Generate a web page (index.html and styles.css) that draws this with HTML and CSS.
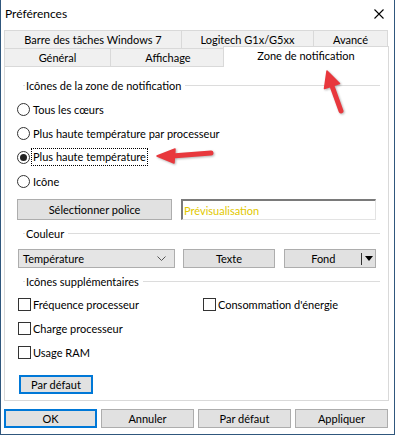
FILE: index.html
```html
<!DOCTYPE html>
<html lang="fr">
<head>
    <meta charset="UTF-8">
    <title>Préférences</title>
    <link rel="stylesheet" href="styles.css">
</head>
<body>
    <div class="window">
        <div class="titlebar">
            <span class="title">Préférences</span>
            <svg class="close" width="10" height="10" viewBox="0 0 10 10">
                <path d="M0.5 0.5 L9.5 9.5 M9.5 0.5 L0.5 9.5" stroke="#000" stroke-width="1.1" fill="none"/>
            </svg>
        </div>

        <div class="tabs">
            <div class="tab-row">
                <div class="tab t-barre">Barre des tâches Windows 7</div>
                <div class="tab t-logi">Logitech G1x/G5xx</div>
                <div class="tab t-avance last">Avancé</div>
            </div>
            <div class="tab-row">
                <div class="tab t-general">Général</div>
                <div class="tab t-affichage">Affichage</div>
                <div class="tab active t-zone">Zone de notification</div>
            </div>
        </div>

        <div class="panel">
            <div class="group-title"><span>Icônes de la zone de notification</span></div>
            <div class="radio-list">
                <div class="option"><span class="radio"></span><span class="label">Tous les cœurs</span></div>
                <div class="option"><span class="radio"></span><span class="label">Plus haute température par processeur</span></div>
                <div class="option"><span class="radio checked"></span><span class="label focus">Plus haute température</span></div>
                <div class="option"><span class="radio"></span><span class="label">Icône</span></div>
            </div>
            <div class="font-row">
                <button class="btn btn-font">Sélectionner police</button>
                <div class="preview">Prévisualisation</div>
            </div>

            <div class="group-title"><span>Couleur</span></div>
            <div class="color-row">
                <div class="combo">
                    <span>Température</span>
                    <svg width="9" height="6" viewBox="0 0 9 6"><polyline points="0.5,0.5 4.5,4.5 8.5,0.5" fill="none" stroke="#555" stroke-width="1"/></svg>
                </div>
                <button class="btn btn-texte">Texte</button>
                <div class="btn btn-fond">
                    <span class="fond-label">Fond</span>
                    <span class="split"></span>
                    <svg width="8" height="5" viewBox="0 0 8 5"><polygon points="0,0 8,0 4,5" fill="#000"/></svg>
                </div>
            </div>

            <div class="group-title"><span>Icônes supplémentaires</span></div>
            <div class="check-grid">
                <div class="option"><span class="check"></span><span class="label">Fréquence processeur</span></div>
                <div class="option"><span class="check"></span><span class="label">Consommation d'énergie</span></div>
                <div class="option"><span class="check"></span><span class="label">Charge processeur</span></div>
                <div></div>
                <div class="option"><span class="check"></span><span class="label">Usage RAM</span></div>
            </div>
            <button class="btn default btn-reset">Par défaut</button>
        </div>

        <div class="actions">
            <button class="btn default">OK</button>
            <button class="btn">Annuler</button>
            <button class="btn">Par défaut</button>
            <button class="btn">Appliquer</button>
        </div>

        <svg class="arrows" width="395" height="435" viewBox="0 0 395 435">
            <!-- fleche vers l'onglet -->
            <line x1="332" y1="86" x2="341" y2="111" stroke="#e8383d" stroke-width="5" stroke-linecap="round"/>
            <polygon points="327,71 339.5,83.5 324.5,88.5" fill="#e8383d" stroke="#e8383d" stroke-width="1.5" stroke-linejoin="round"/>
            <!-- fleche vers l'option -->
            <line x1="172" y1="156" x2="211" y2="153" stroke="#e8383d" stroke-width="5" stroke-linecap="round"/>
            <polygon points="157,156 175,149 174,163" fill="#e8383d" stroke="#e8383d" stroke-width="1.5" stroke-linejoin="round"/>
        </svg>
    </div>
</body>
</html>
```

FILE: styles.css
```css
body {
    margin: 0;
    padding: 0;
    background: #fff;
    font-family: Lato, "Noto Sans", sans-serif;
    font-size: 11px;
    color: #000;
}
.window {
    position: relative;
    width: 395px;
    height: 435px;
    box-sizing: border-box;
    border: 1px solid #30577d;
    border-top: none;
    background: #fff;
    overflow: hidden;
}
.titlebar {
    height: 30px;
    display: flex;
    align-items: center;
    justify-content: space-between;
    padding: 0 10px 0 4px;
    box-sizing: border-box;
}
.title {
    font-size: 12px;
    margin-top: -3px;
}
.close {
    margin-top: -3px;
}
.tabs {
    padding-left: 3px;
}
.tab-row {
    display: flex;
    height: 18px;
}
.tab {
    box-sizing: border-box;
    height: 18px;
    display: flex;
    align-items: center;
    justify-content: center;
    background: #f0f0f0;
    border-top: 1px solid #d9d9d9;
    border-left: 1px solid #d9d9d9;
}
.tab.last {
    border-right: 1px solid #d9d9d9;
}
.t-barre { width: 177px; }
.t-logi { width: 132px; }
.t-avance { width: 75px; }
.t-general { width: 106px; }
.t-affichage { width: 115px; }
.tab.active {
    position: relative;
    z-index: 2;
    width: 166px;
    height: 21px;
    margin: -2px 0 -1px -2px;
    background: #fff;
    border-right: 1px solid #d9d9d9;
    padding-bottom: 3px;
}
.panel {
    position: relative;
    z-index: 1;
    margin-left: 3px;
    width: 385px;
    height: 335px;
    box-sizing: border-box;
    border: 1px solid #d9d9d9;
    background: #fff;
    padding: 11px 12px 0 12px;
}
.group-title {
    display: flex;
    align-items: center;
    height: 14px;
    margin: 0 -4px 0 6px;
}
.group-title::before {
    content: "";
    width: 2px;
    border-top: 1px solid #dcdcdc;
}
.group-title::after {
    content: "";
    flex: 1;
    border-top: 1px solid #dcdcdc;
}
.group-title span {
    padding: 0 4px 0 1px;
}
.radio-list {
    margin-top: 5px;
}
.option {
    display: flex;
    align-items: center;
    height: 24px;
}
.radio {
    width: 13px;
    height: 13px;
    box-sizing: border-box;
    border: 1px solid #333;
    border-radius: 50%;
    margin-right: 3px;
    display: flex;
    align-items: center;
    justify-content: center;
}
.radio.checked::after {
    content: "";
    width: 7px;
    height: 7px;
    border-radius: 50%;
    background: #222;
}
.label.focus {
    outline: 1px dotted #000;
    outline-offset: 0;
    padding: 0 1px;
    margin-left: -1px;
    line-height: 16px;
}
.btn {
    font-family: inherit;
    font-size: inherit;
    color: #000;
    background: #e1e1e1;
    border: 1px solid #adadad;
    box-sizing: border-box;
    padding: 0;
    margin: 0;
    display: flex;
    align-items: center;
    justify-content: center;
}
.btn.default {
    border: 2px solid #0078d7;
}
.font-row {
    display: flex;
    margin-top: 6px;
}
.btn-font {
    width: 155px;
    height: 21px;
}
.preview {
    margin-left: 9px;
    width: 195px;
    height: 21px;
    box-sizing: border-box;
    border: 1px solid #e3e3e3;
    border-top: 2px solid #7a7a7a;
    border-left: 2px solid #7a7a7a;
    color: #e2c800;
    display: flex;
    align-items: center;
    padding-left: 1px;
}
.group-title + .color-row {
    margin-top: 9px;
}
.font-row + .group-title {
    margin-top: 6px;
}
.color-row {
    display: flex;
    height: 19px;
}
.combo {
    width: 157px;
    margin-left: 1px;
    box-sizing: border-box;
    background: #e5e5e5;
    border: 1px solid #adadad;
    display: flex;
    align-items: center;
    justify-content: space-between;
    padding: 0 8px 0 4px;
}
.btn-texte {
    width: 93px;
    margin-left: 8px;
}
.btn-fond {
    width: 92px;
    margin-left: 9px;
    justify-content: flex-start;
}
.fond-label {
    width: 76px;
    text-align: center;
}
.split {
    width: 1px;
    height: 12px;
    background: #333;
    margin-right: 3px;
}
.color-row + .group-title {
    margin-top: 6px;
}
.check-grid {
    display: grid;
    grid-template-columns: 185px auto;
    margin-top: 4px;
}
.check {
    width: 13px;
    height: 13px;
    box-sizing: border-box;
    border: 1px solid #333;
    background: #fff;
    margin: 0 2px 0 1px;
}
.btn-reset {
    width: 74px;
    height: 19px;
    margin: 11px 0 0 2px;
}
.actions {
    display: flex;
    gap: 4px;
    margin: 8px 0 0 3px;
}
.actions .btn {
    width: 93px;
    height: 19px;
}
.arrows {
    position: absolute;
    top: 0;
    left: -1px;
    z-index: 5;
    pointer-events: none;
    filter: drop-shadow(1px 1px 1px rgba(0, 0, 0, 0.3));
}
```
